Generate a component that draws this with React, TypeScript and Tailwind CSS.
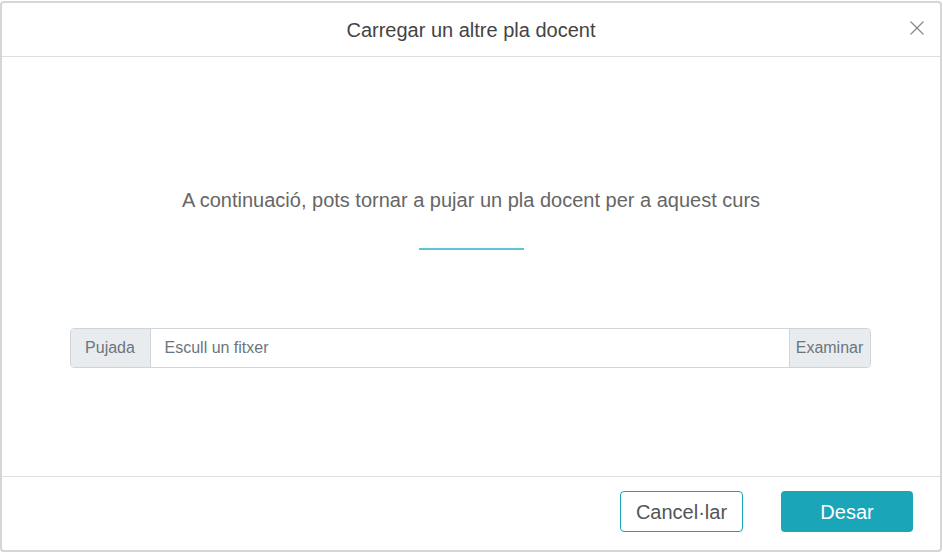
import { X } from 'lucide-react';

export default function App() {
  return (
    <div className="w-[943px] h-[553px] bg-white pt-px" style={{ fontFamily: '"Liberation Sans", Arial, sans-serif' }}>
      {/* diàleg */}
      <div className="w-[942px] h-[551px] border-2 border-[#d6d6d6] rounded-[4px] flex flex-col bg-white">
        {/* capçalera */}
        <div className="relative h-[54px] border-b border-[#dedede] flex items-center justify-center shrink-0">
          <h2 className="text-[20px] text-[#444] leading-none">Carregar un altre pla docent</h2>
          <button className="absolute right-[11px] top-[13px] text-[#8a8a8a]">
            <X size={24} strokeWidth={1.3} />
          </button>
        </div>

        {/* cos */}
        <div className="flex-1 flex flex-col items-center pt-[132px]">
          <p className="text-[20px] text-[#666] leading-[23px]">
            A continuació, pots tornar a pujar un pla docent per a aquest curs
          </p>
          <div className="mt-[36px] w-[105px] h-[2px] bg-[#5cc6d5]" />

          <div className="mt-[78px] w-[801px] h-[40px] flex border border-[#ced4da] rounded-[4px] overflow-hidden text-[16px] ml-[-2px]">
            <span className="w-[80px] bg-[#e9ecef] border-r border-[#ced4da] flex items-center justify-center text-[#6c757d]">Pujada</span>
            <span className="flex-1 flex items-center pl-[14px] text-[#6c757d]">Escull un fitxer</span>
            <span className="w-[81px] bg-[#e9ecef] border-l border-[#ced4da] flex items-center justify-center text-[#6c757d]">Examinar</span>
          </div>
        </div>

        {/* peu */}
        <div className="h-[74px] border-t border-[#dedede] flex justify-end items-start pt-[14px] pr-[27px] gap-[38px] shrink-0">
          <button className="w-[123px] h-[41px] border border-[#1ba3b6] rounded-[4px] text-[20px] text-[#555] bg-white">
            Cancel·lar
          </button>
          <button className="w-[132px] h-[41px] rounded-[4px] text-[20px] text-white bg-[#1ba5b8]">
            Desar
          </button>
        </div>
      </div>
    </div>
  );
}
